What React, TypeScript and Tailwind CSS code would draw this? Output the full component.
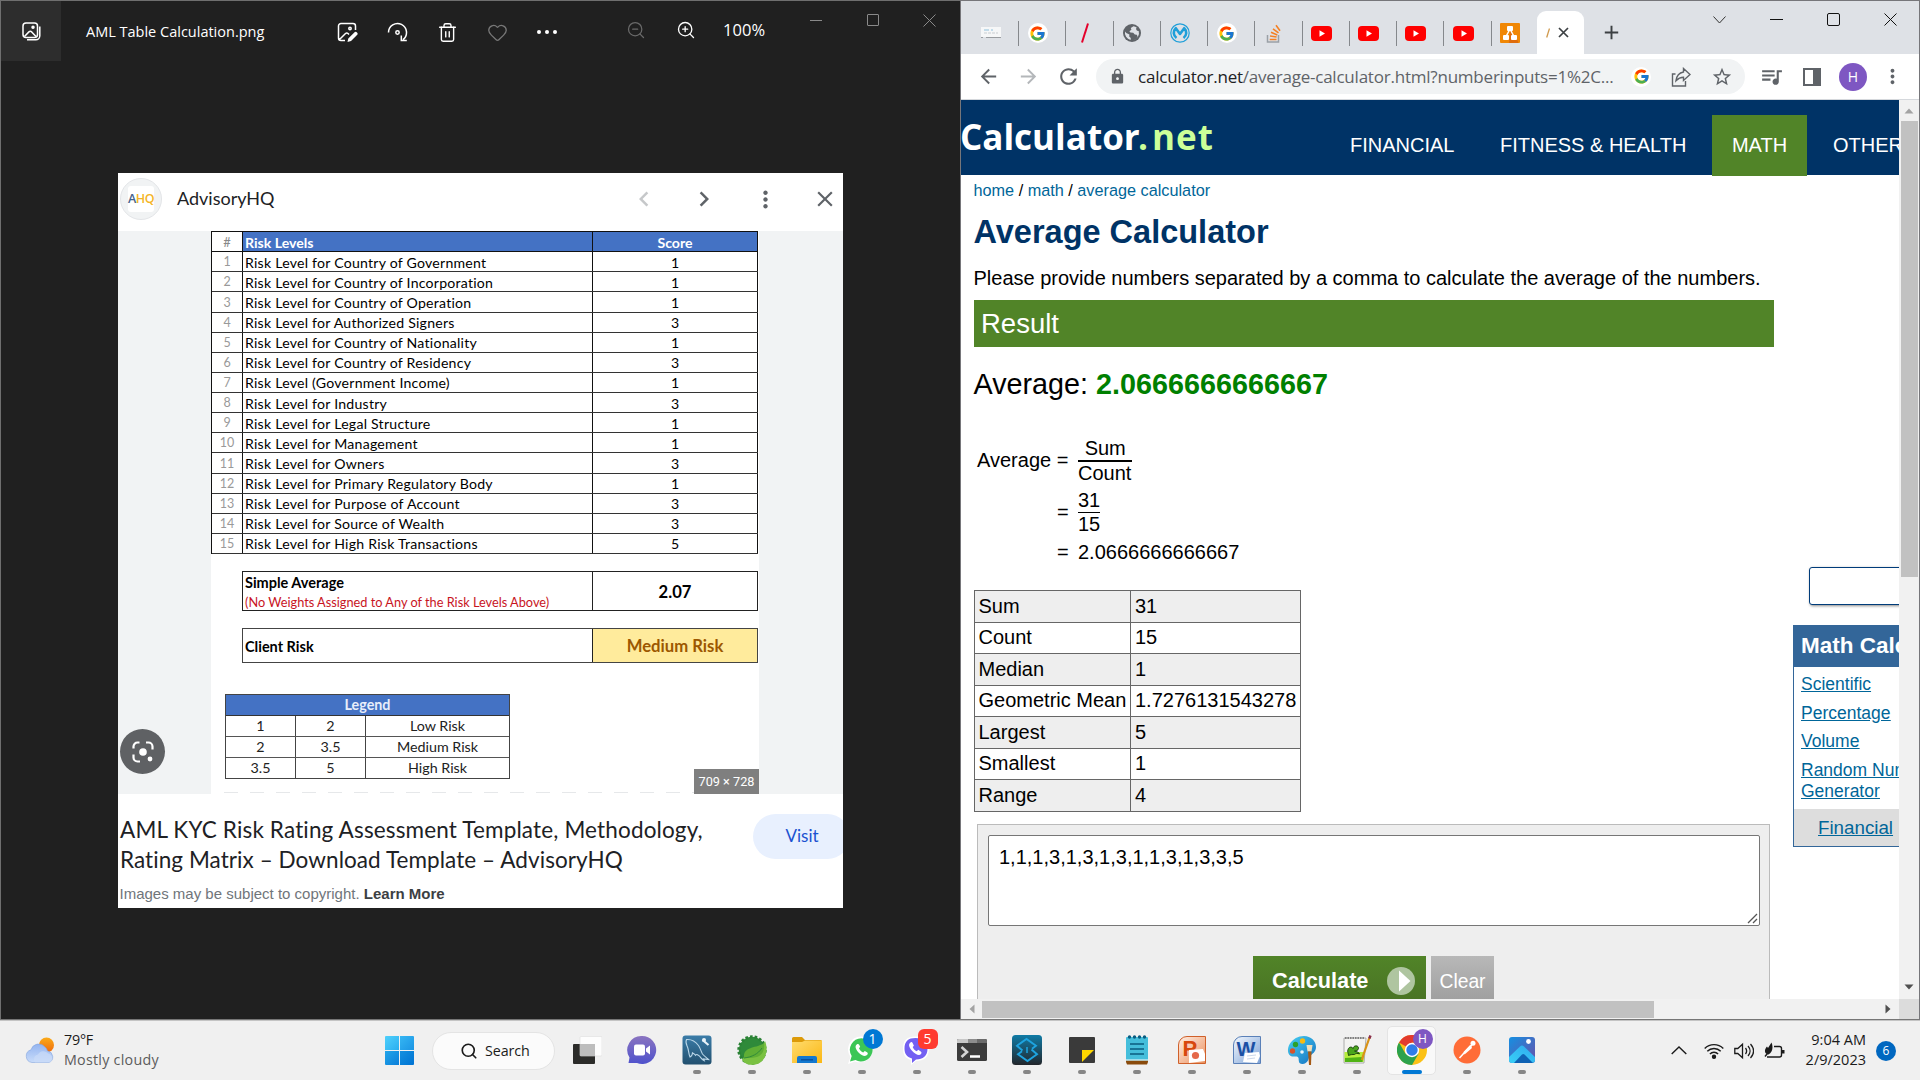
import React from "react";
import { FcGoogle } from "react-icons/fc";
import {
  MdArrowBack,
  MdArrowForward,
  MdRefresh,
  MdLock,
  MdStarBorder,
  MdQueueMusic,
  MdMoreVert,
  MdClose,
  MdChevronLeft,
  MdChevronRight,
  MdAdd,
} from "react-icons/md";
import { Heart, Trash2, ZoomIn, ZoomOut, Search } from "lucide-react";

const SEGOE = "font-['Open_Sans','Noto_Sans',sans-serif]";
const ARIAL = "font-['Liberation_Sans',Arial,sans-serif]";
const CALIBRI = "font-['Lato',sans-serif]";
const GOOGLE = "font-['Lato',sans-serif]";

type Kids = { children?: React.ReactNode };

/* ------------------------------ Photos window ------------------------------ */

const risks: [string, number][] = [
  ["Risk Level for Country of Government", 1],
  ["Risk Level for Country of Incorporation", 1],
  ["Risk Level for Country of Operation", 1],
  ["Risk Level for Authorized Signers", 3],
  ["Risk Level for Country of Nationality", 1],
  ["Risk Level for Country of Residency", 3],
  ["Risk Level (Government Income)", 1],
  ["Risk Level for Industry", 3],
  ["Risk Level for Legal Structure", 1],
  ["Risk Level for Management", 1],
  ["Risk Level for Owners", 3],
  ["Risk Level for Primary Regulatory Body", 1],
  ["Risk Level for Purpose of Account", 3],
  ["Risk Level for Source of Wealth", 3],
  ["Risk Level for High Risk Transactions", 5],
];

const legend = [
  ["1", "2", "Low Risk"],
  ["2", "3.5", "Medium Risk"],
  ["3.5", "5", "High Risk"],
];

function PhotosIcon() {
  return (
    <svg width="19" height="19" viewBox="0 0 19 19" fill="none" stroke="#fff" strokeWidth="1.5">
      <rect x="1" y="1" width="14.5" height="14.5" rx="3" />
      <path d="M17.8 4.5v9.3a4 4 0 0 1-4 4H5M2.5 14.5l4.4-4.6a2 2 0 0 1 2.8 0l4.3 4.6" />
      <circle cx="11" cy="5.2" r="1" fill="#fff" />
    </svg>
  );
}

function EditIcon() {
  return (
    <svg width="21" height="21" viewBox="0 0 21 21" fill="none" stroke="#fff" strokeWidth="1.5">
      <path d="M18.5 8V4a2.5 2.5 0 0 0-2.5-2.5H4A2.5 2.5 0 0 0 1.500 4v12A2.500 2.500 0 0 0 4 18.500h4M2.500 17.500l6-6a2 2 0 0 1 2.500 0l1 1" />
      <circle cx="13" cy="6.500" r="1.200" />
      <path d="M10.500 20l.8-3.600 6-6a1.900 1.900 0 0 1 2.700 2.700l-6 6z" fill="#fff" stroke="none" />
    </svg>
  );
}

function RotateIcon() {
  return (
    <svg width="21" height="21" viewBox="0 0 21 21" fill="none" stroke="#fff" strokeWidth="1.500">
      <path d="M1.500 10.500a9 9 0 1 1 14.500 7.100M14.300 13.500v5h5.500" />
      <circle cx="10.500" cy="10.500" r="1.700" />
    </svg>
  );
}

function Cell({ w, children }: Kids & { w: string }) {
  return <div className={`flex shrink-0 items-center justify-center ${w}`}>{children}</div>;
}

function PhotosToolbar() {
  return (
    <div className={`flex h-[60px] text-white ${SEGOE}`}>
      <div className="flex w-[60px] shrink-0 items-center justify-center bg-[#2d2d2d]">
        <PhotosIcon />
      </div>
      <div className="ml-[25px] flex w-[236px] shrink-0 items-center pt-[2px] text-[14.500px] whitespace-nowrap">
        AML Table Calculation.png
      </div>
      <div className="flex shrink-0 pt-[2px]">
        <Cell w="w-[50px]"><EditIcon /></Cell>
        <Cell w="w-[50px]"><RotateIcon /></Cell>
        <Cell w="w-[50px]"><Trash2 size={21} strokeWidth={1.600} /></Cell>
        <Cell w="w-[50px]"><Heart size={21} strokeWidth={1.500} color="#777" /></Cell>
        <Cell w="w-[50px]">
          <div className="flex gap-[4px]">
            <i className="size-[4px] rounded-full bg-white" />
            <i className="size-[4px] rounded-full bg-white" />
            <i className="size-[4px] rounded-full bg-white" />
          </div>
        </Cell>
      </div>
      <div className="ml-[39px] flex shrink-0 pb-[2px]">
        <Cell w="w-[50px]"><ZoomOut size={20} strokeWidth={1.500} color="#6a6a6a" /></Cell>
        <Cell w="w-[50px]"><ZoomIn size={20} strokeWidth={1.600} /></Cell>
        <div className="ml-[12px] flex w-[64px] items-center text-[16.500px] tracking-[0.100px]">100%</div>
      </div>
      <div className="flex h-[38px] shrink-0">
        <Cell w="w-[57px]"><i className="h-px w-[12px] bg-[#8a8a8a]" /></Cell>
        <Cell w="w-[57px]"><i className="size-[12px] rounded-[1px] border border-[#8a8a8a]" /></Cell>
        <Cell w="w-[57px]">
          <svg width="13" height="13" viewBox="0 0 13 13" stroke="#8a8a8a"><path d="M.5.5l12 12M12.500.5l-12 12" /></svg>
        </Cell>
      </div>
    </div>
  );
}

function RiskSheet() {
  return (
    <div className={`flex w-[548px] shrink-0 flex-col bg-white text-black ${CALIBRI}`}>
      <div className="flex w-[547px] flex-col border-t border-l border-[#111]">
        <div className="flex h-[20.140px] border-b border-[#111] text-[14.100px] font-bold text-white">
          <div className="flex w-[31px] items-center justify-center border-r border-[#111] bg-white pt-[2px] text-[13px] font-normal text-[#888]">#</div>
          <div className="flex w-[350px] items-center border-r border-[#111] bg-[#4472c4] pt-px pl-[2px]">Risk Levels</div>
          <div className="flex flex-1 items-center justify-center border-r border-[#111] bg-[#4472c4] pt-px">Score</div>
        </div>
        {risks.map(([label, score], i) => (
          <div key={label} className="flex h-[20.140px] border-b border-[#333] text-[14.100px]">
            <div className="flex w-[31px] items-center justify-center border-r border-[#111] pt-[2px] text-[12.500px] text-[#999]">{i + 1}</div>
            <div className="flex w-[350px] items-center border-r border-[#111] pt-px pl-[2px] tracking-[0.240px] whitespace-nowrap">{label}</div>
            <div className="flex flex-1 items-center justify-center border-r border-[#111] pt-px">{score}</div>
          </div>
        ))}
      </div>
      <div className="mt-[17px] ml-[31px] flex h-[40px] w-[516px] border border-[#222]">
        <div className="flex w-[350px] flex-col border-r border-[#222] pl-[2px]">
          <span className="h-[20px] text-[14.500px] leading-[21px] font-bold">Simple Average</span>
          <span className="h-[18px] text-[12.750px] leading-[20px] whitespace-nowrap text-[#c8141e]">(No Weights Assigned to Any of the Risk Levels Above)</span>
        </div>
        <div className="flex flex-1 items-center justify-center pt-[3px] text-[16.600px] font-bold">2.07</div>
      </div>
      <div className="mt-[17px] ml-[31px] flex h-[35px] w-[516px] border border-[#444]">
        <div className="flex w-[350px] items-center border-r border-[#222] pt-[2px] pl-[2px] text-[14.500px] font-bold">Client Risk</div>
        <div className="flex flex-1 items-center justify-center bg-[#ffeb9c] pt-[3px] text-[16.700px] font-bold text-[#9c5700]">Medium Risk</div>
      </div>
      <div className="mt-[31px] ml-[14px] flex w-[285px] flex-col border border-[#444] text-[14.300px] text-[#222]">
        <div className="flex h-[21px] items-center justify-center border-b border-[#333] bg-[#4472c4] font-bold text-[#e8eefa]">Legend</div>
        {legend.map((row, i) => (
          <div key={i} className="flex h-[21px] border-b border-[#555] last:h-[20px] last:border-b-0">
            <div className="flex w-[70px] items-center justify-center border-r border-[#444]">{row[0]}</div>
            <div className="flex w-[70px] items-center justify-center border-r border-[#444]">{row[1]}</div>
            <div className="flex flex-1 items-center justify-center">{row[2]}</div>
          </div>
        ))}
      </div>
      <div className="mt-auto flex items-end">
        <div className="mb-px ml-[13px] h-px w-[470px] bg-[repeating-linear-gradient(90deg,#e6e8ea_0_14px,#fff_14px_26px)]" />
        <div className="-mt-[20px] flex h-[25px] w-[65px] items-center justify-center bg-[#7f7f7f] text-[12.700px] text-white font-['Roboto',sans-serif]">709 × 728</div>
      </div>
    </div>
  );
}

function PhotosWindow() {
  return (
    <div className="flex h-[1019px] w-[960px] shrink-0 flex-col border-t border-l border-[#6f6f6f] bg-[#202020]">
      <PhotosToolbar />
      <div className="mt-[112px] ml-[117px] flex h-[735px] w-[725px] flex-col overflow-hidden bg-white">
        <div className="flex h-[58px] shrink-0 items-center pl-[2px]">
          <div className="-mt-[6px] flex size-[42px] shrink-0 items-center justify-center rounded-full border border-[#e3e5e8] bg-[#f1f3f4]">
            <div className="flex size-[26px] items-center justify-center rounded-[3px] bg-white text-[12.500px] font-semibold tracking-[-0.500px] text-[#f4b526] font-['Open_Sans',sans-serif]">
              <span className="text-[#44648c]">A</span>HQ
            </div>
          </div>
          <div className={`-mt-[8px] ml-[15px] flex w-[431px] shrink-0 text-[18px] text-[#202124] ${GOOGLE}`}>AdvisoryHQ</div>
          <div className="-mt-[6px] flex text-[#5f6368]">
            <Cell w="w-[72px]"><MdChevronLeft size={30} color="#c6c8ca" /></Cell>
            <Cell w="w-[48px]"><MdChevronRight size={30} /></Cell>
            <Cell w="w-[74px]"><MdMoreVert size={27} /></Cell>
            <Cell w="w-[46px]"><MdClose size={26} /></Cell>
          </div>
        </div>
        <div className="flex h-[563px] shrink-0 bg-[#f1f3f4]">
          <div className="flex w-[93px] shrink-0 items-end pb-[20px] pl-[2px]">
            <div className="flex size-[45px] items-center justify-center rounded-full bg-[#5f6164]">
              <svg width="22" height="22" viewBox="0 0 22 22" fill="none" stroke="#fff" strokeWidth="2.200">
                <path d="M1.500 7.500V5.500a4 4 0 0 1 4-4h2M14 1.500h2.500a4 4 0 0 1 4 4v3M1.500 13.500v3a4 4 0 0 0 4 4h2.500" />
                <circle cx="11" cy="11" r="3.800" fill="#fff" stroke="none" />
                <circle cx="18" cy="18" r="2.400" fill="#fff" stroke="none" />
              </svg>
            </div>
          </div>
          <RiskSheet />
        </div>
        <div className="flex h-[114px] shrink-0 justify-between pl-[2px]">
          <div className="flex flex-col">
            <div className={`mt-[21px] text-[22.500px] leading-[30px] tracking-[0.150px] whitespace-nowrap text-[#202124] ${GOOGLE}`}>
              <p>AML KYC Risk Rating Assessment Template, Methodology,</p>
              <p className="tracking-[0.070px]">Rating Matrix – Download Template – AdvisoryHQ</p>
            </div>
            <p className={`mt-[8px] -ml-[0.500px] text-[15px] leading-[22px] text-[#70757a] ${ARIAL}`}>
              Images may be subject to copyright. <b className="text-[#3c4043]">Learn More</b>
            </p>
          </div>
          <div className="mt-[20px] -mr-[7px] flex h-[45px] w-[97px] shrink-0 items-center justify-center rounded-full bg-[#e8f0fe]">
            <span className={`pb-px pl-px text-[17px] text-[#1b52d0] ${GOOGLE}`}>Visit</span>
          </div>
        </div>
      </div>
    </div>
  );
}

/* ------------------------------ Browser window ------------------------------ */

function YouTube() {
  return (
    <svg width="21" height="15" viewBox="0 0 21 15"><rect width="21" height="15" rx="4" fill="#f00" /><path d="M8.500 4.300v6.400l5.500-3.200z" fill="#fff" /></svg>
  );
}

const favicons = [
  <svg key="a" width="20" height="12" viewBox="0 0 20 12"><rect width="20" height="10" fill="#f6f7f8" /><path d="M3 3h5M10 3h2" stroke="#8fc0dc" /><path d="M3 6h14" stroke="#c9cdd1" strokeDasharray="3 1" /><path d="M0 10.500h2M5 10.500h15" stroke="#9a9da1" strokeWidth="1.200" /></svg>,
  <div key="b" className="flex size-[20px] items-center justify-center rounded-full bg-white"><FcGoogle size={17} /></div>,
  <svg key="c" width="10" height="20" viewBox="0 0 10 20" stroke="#e4002b" strokeWidth="2"><path d="M8 .5L2 19.500" /></svg>,
  <svg key="d" width="18" height="18" viewBox="0 0 18 18"><circle cx="9" cy="9" r="9" fill="#5f6368" /><path d="M10.500 2.200L7.800 4l.6 1.800-2 1.400 1 1.300 2.800.2 1.600 1.800 2 .3.800 1.800-1.500 2.200-2.600 1.200a7.200 7.200 0 0 0 5.200-9l-1.700-.3-1-1.800.7-1.300a7 7 0 0 0-3.200-1.400zM2 7.500a7.200 7.200 0 0 0 5.600 8.400l.2-2-1.600-1.500.2-1.900L3.300 9z" fill="#dee1e6" /></svg>,
  <svg key="e" width="20" height="20" viewBox="0 0 20 20" fill="none" stroke="#1f9fd9"><circle cx="10" cy="10" r="9.200" strokeWidth="1.200" /><path d="M6.500 15A6.300 6.300 0 0 1 5.800 5.200L10 11l4.200-5.800A6.300 6.300 0 0 1 13.500 15" strokeWidth="2.600" strokeLinejoin="round" /></svg>,
  <div key="f" className="flex size-[20px] items-center justify-center rounded-full bg-white"><FcGoogle size={17} /></div>,
  <svg key="g" width="18" height="20" viewBox="0 0 18 20" fill="none"><path d="M2.500 12v7h11v-7" stroke="#9aa0a6" strokeWidth="1.500" /><path d="M4.700 16.500h6.800M5 13l6.600 1M6 9.300l6.300 2.600M8 5.800l5.500 4M11 2.300l4 5.500" stroke="#f48024" strokeWidth="1.600" /></svg>,
  <YouTube key="h" />,
  <YouTube key="i" />,
  <YouTube key="j" />,
  <YouTube key="k" />,
  <svg key="l" width="20" height="20" viewBox="0 0 20 20"><rect width="20" height="20" rx="1" fill="#f08705" /><path d="M10 8l8 10v2H9z" fill="#df6c0c" /><path d="M10 6L6 13.500M10 6l4 7.500" stroke="#fff" strokeWidth="1.500" /><rect x="7" y="3" width="6" height="5" rx="1" fill="#fff" /><rect x="3" y="12" width="6" height="5" rx="1" fill="#fff" /><rect x="11" y="12" width="6" height="5" rx="1" fill="#fff" /></svg>,
];

function TabStrip() {
  return (
    <div className="flex h-[53px] bg-[#dee1e6]">
      <div className="flex w-[576px] shrink-0 items-center pt-[11px] pl-[8px]">
        {favicons.map((f, i) => (
          <div key={i} className="flex h-[26px] w-[47.250px] shrink-0 items-center">
            <div className="flex w-[43px] shrink-0 justify-center">{f}</div>
            {i < favicons.length - 1 && <i className="ml-[6px] h-[25px] w-px shrink-0 bg-[#85888c]" />}
          </div>
        ))}
      </div>
      <div className="mt-[10px] flex h-[43px] w-[47px] shrink-0 items-center justify-center gap-[8px] rounded-t-[9px] bg-white pr-[6px]">
        <svg width="4" height="10" viewBox="0 0 4 10" stroke="#d09a4e" strokeWidth="1.300"><path d="M3.500.5L.7 9.500" /></svg>
        <svg width="11" height="11" viewBox="0 0 11 11" stroke="#3c4043" strokeWidth="1.700"><path d="M1 1l9 9M10 1l-9 9" /></svg>
      </div>
      <div className="mt-[10px] flex h-[43px] w-[54px] shrink-0 items-center justify-center"><MdAdd size={23} color="#3c4043" /></div>
      <div className="ml-auto flex h-[37px]">
        <Cell w="w-[57px]"><svg width="13" height="8" viewBox="0 0 13 8" fill="none" stroke="#333"><path d="M.5.5l6 6.500 6-6.500" /></svg></Cell>
        <Cell w="w-[57px]"><i className="h-px w-[13px] bg-[#111]" /></Cell>
        <Cell w="w-[57px]"><i className="size-[13px] rounded-[2px] border border-[#111]" /></Cell>
        <Cell w="w-[57px]"><svg width="13" height="13" viewBox="0 0 13 13" stroke="#111"><path d="M.5.5l12 12M12.500.5l-12 12" /></svg></Cell>
      </div>
    </div>
  );
}

function Toolbar() {
  return (
    <div className="flex h-[46px] items-center border-b border-[#d5d8dc] bg-white text-[#5f6368]">
      <div className="flex pl-[7px]">
        <Cell w="w-[40px]"><MdArrowBack size={23} /></Cell>
        <Cell w="w-[41px]"><MdArrowForward size={23} color="#b4b7ba" /></Cell>
        <Cell w="w-[39px]"><MdRefresh size={25} /></Cell>
      </div>
      <div className="ml-[8px] flex h-[35px] w-[649px] shrink-0 items-center rounded-full bg-[#f1f3f4]">
        <div className="flex w-[42px] justify-center pl-px"><MdLock size={17} /></div>
        <div className={`flex w-[485px] text-[17px] tracking-[-0.220px] whitespace-nowrap ${SEGOE}`}>
          <span className="text-[#202124]">calculator.net</span>/average-calculator.html?numberinputs=1%2C...
        </div>
        <Cell w="w-[36px]"><div className="flex size-[20px] items-center justify-center rounded-full bg-white"><FcGoogle size={17} /></div></Cell>
        <Cell w="w-[44px]">
          <svg width="20" height="20" viewBox="0 0 20 20" fill="none" stroke="#5f6368" strokeWidth="1.400"><path d="M4.500 7H1.500v12h13v-5M12.500 1.500L19 7.500l-6.500 6V10.300c-3 0-5 .8-7.500 3.400.6-4.800 3.500-8 7.500-8.700z" /></svg>
        </Cell>
        <Cell w="w-[38px]"><MdStarBorder size={22} /></Cell>
      </div>
      <div className="ml-[5px] flex">
        <Cell w="w-[42px]"><MdQueueMusic size={25} /></Cell>
        <Cell w="w-[39px]"><i className="h-[18px] w-[18px] border-[2px] border-r-[8px] border-[#5f6368]" /></Cell>
        <Cell w="w-[44px]">
          <div className={`flex size-[28px] items-center justify-center rounded-full bg-[#7e57c2] text-[14px] text-white ${SEGOE}`}>H</div>
        </Cell>
        <Cell w="w-[34px]"><MdMoreVert size={23} /></Cell>
      </div>
    </div>
  );
}

const stats = [
  ["Sum", "31"],
  ["Count", "15"],
  ["Median", "1"],
  ["Geometric Mean", "1.7276131543278"],
  ["Largest", "5"],
  ["Smallest", "1"],
  ["Range", "4"],
];

function SiteHeader() {
  return (
    <div className="flex h-[75px] shrink-0 bg-[#003366] text-[20px] whitespace-nowrap text-white">
      <div className="flex h-[74px] w-[369px] shrink-0 items-center font-['Open_Sans',sans-serif] text-[35px] font-bold">
        <span className="-ml-px w-[178px] shrink-0">Calculator</span>
        <span className="w-[14px] shrink-0 text-[#ccff99]">.</span>
        <span className="tracking-[1px] text-[#ccff99]">net</span>
      </div>
      <div className="mt-[15px] flex h-[61px] shrink-0">
        <div className="ml-[20px] flex w-[150px] items-center pb-[2px]">FINANCIAL</div>
        <div className="flex w-[212px] items-center pb-[2px]">FITNESS &amp; HEALTH</div>
        <div className="flex h-[61px] w-[95px] items-center justify-center bg-[#518428] pb-[2px]">MATH</div>
        <div className="ml-[26px] flex items-center pb-[2px]">OTHER</div>
      </div>
    </div>
  );
}

function Fraction({ top, bottom, thick }: { top: string; bottom: string; thick?: boolean }) {
  return (
    <div className="flex flex-col items-center">
      <span className={thick ? "h-[23px] leading-[23px]" : "h-[24px] leading-[24px]"}>{top}</span>
      <span className={thick ? "h-[2px] w-full bg-black" : "h-px w-full bg-black"} />
      <span className={thick ? "h-[22px] pr-px leading-[22px]" : "h-[22px] leading-[22px]"}>{bottom}</span>
    </div>
  );
}

function Main() {
  return (
    <div className="flex w-[814px] shrink-0 flex-col pl-[13px] text-[20px] whitespace-nowrap text-black">
      <div className="-ml-[0.500px] flex h-[31px] shrink-0 items-center gap-[4.500px] text-[16.250px]">
        <a className="text-[#006699]">home</a>/<a className="text-[#006699]">math</a>/<a className="text-[#006699]">average calculator</a>
      </div>
      <h1 className="-ml-[0.500px] flex h-[52px] shrink-0 items-center pt-px text-[32.500px] font-bold text-[#003366]">Average Calculator</h1>
      <p className="-ml-[0.500px] flex h-[42px] shrink-0 items-center pb-[3px]">Please provide numbers separated by a comma to calculate the average of the numbers.</p>
      <h2 className="flex h-[47px] w-[800px] shrink-0 items-center bg-[#518428] pl-[7px] text-[27.500px] text-white">Result</h2>
      <p className="-ml-[0.500px] flex h-[73px] shrink-0 items-center gap-[8px] pt-[2px] text-[28.750px]">
        Average: <b className="text-[#008000]">2.0666666666667</b>
      </p>
      <div className="mt-[17px] flex shrink-0 flex-col gap-[4px]">
        <div className="flex h-[47px] items-center">
          <span className="w-[104px] pb-[2px] pl-[3px]">Average =</span>
          <Fraction top="Sum" bottom="Count" thick />
        </div>
        <div className="flex h-[47px] items-center">
          <span className="w-[104px] pl-[83px]">=</span>
          <Fraction top="31" bottom="15" />
        </div>
      </div>
      <div className="flex h-[34px] shrink-0 items-center">
        <span className="w-[104px] pl-[83px]">=</span>2.0666666666667
      </div>
      <div className="mt-[21px] flex w-[327px] shrink-0 flex-col border-t border-l border-[#666]">
        {stats.map(([k, v]) => (
          <div key={k} className="flex h-[31px] border-b border-[#666] odd:h-[32px] odd:bg-[#eee]">
            <div className="flex w-[156px] items-center border-r border-[#666] pb-[2px] pl-[3.500px]">{k}</div>
            <div className="flex flex-1 items-center border-r border-[#666] pb-[2px] pl-[4px]">{v}</div>
          </div>
        ))}
      </div>
      <div className="mt-[12px] ml-[3px] flex h-[175px] w-[793px] shrink-0 flex-col border border-b-0 border-[#bbb] bg-[#eee] pt-[10px] pl-[10px]">
        <div className="flex h-[91px] w-[772px] shrink-0 justify-between rounded-[2px] border border-[#767676] bg-white pl-[10px]">
          <span className="mt-[10px] h-[23px] leading-[23px]">1,1,1,3,1,3,1,3,1,1,3,1,3,3,5</span>
          <svg className="mr-px mb-px self-end" width="11" height="11" viewBox="0 0 11 11" stroke="#555" strokeWidth="1.300"><path d="M1 10L10 1M6 10l4-4" /></svg>
        </div>
        <div className="mt-[30px] ml-[265px] flex h-[43px] gap-[5px] text-white">
          <div className="flex w-[173px] items-center justify-between bg-linear-to-b from-[#518428] to-[#4a7424] pt-[7px] pr-[11px] pl-[19px] text-[21.700px] font-bold">
            Calculate
            <svg width="28" height="28" viewBox="0 0 28 28"><circle cx="14" cy="14" r="14" fill="#afc5a0" /><path d="M12 3.500v21L23.500 14z" fill="#fff" /></svg>
          </div>
          <div className="flex w-[63px] items-center justify-center bg-linear-to-b from-[#b8b8b8] to-[#a0a0a0] pt-[9px] text-[19.300px]">Clear</div>
        </div>
      </div>
    </div>
  );
}

function Sidebar() {
  return (
    <div className="flex w-[106px] shrink-0 flex-col overflow-hidden whitespace-nowrap">
      <div className="mt-[392px] ml-[16px] h-[38px] w-[200px] shrink-0 rounded-[3px] border border-[#003c7a] bg-white shadow-[1px_1px_3px_#888]" />
      <div className="mt-[20px] flex w-[300px] shrink-0 flex-col border border-[#336699]">
        <div className="flex h-[41px] items-center bg-[#336699] pb-[2px] pl-[7px] text-[22.500px] font-bold text-white">Math Calculators</div>
        <div className="flex h-[142px] flex-col pt-[7px] pl-[7px] text-[17.500px] leading-[21px] text-[#006699] underline underline-offset-1">
          <a className="mb-[8px]">Scientific</a>
          <a className="mb-[7px]">Percentage</a>
          <a className="mb-[8px]">Volume</a>
          <a>Random Number</a>
          <a>Generator</a>
        </div>
        <div className="flex h-[37px] items-center bg-[#ddd] pt-px pl-[24px] text-[18.750px] text-[#006699] underline underline-offset-1">Financial</div>
      </div>
    </div>
  );
}

function Arrow({ d, fill }: { d: string; fill: string }) {
  return <svg width="10" height="10" viewBox="0 0 10 10" fill={fill}><path d={d} /></svg>;
}

function BrowserWindow() {
  return (
    <div className="flex h-[1019px] w-[960px] shrink-0 flex-col border-x border-t border-[#76767a] bg-white">
      <TabStrip />
      <Toolbar />
      <div className={`flex h-[899px] shrink-0 ${ARIAL}`}>
        <div className="flex w-[938px] shrink-0 flex-col overflow-hidden">
          <SiteHeader />
          <div className="flex h-[824px] shrink-0">
            <Main />
            <div className="w-[18px] shrink-0" />
            <Sidebar />
          </div>
        </div>
        <div className="flex w-[20px] shrink-0 flex-col items-center bg-[#f1f1f1]">
          <div className="flex h-[21px] items-center"><Arrow d="M5 2.500L9.500 7.500H.5z" fill="#a3a3a3" /></div>
          <div className="h-[456px] w-[17px] bg-[#c1c1c1]" />
          <div className="mt-auto flex h-[24px] items-center"><Arrow d="M5 7.500L9.500 2.500H.5z" fill="#505050" /></div>
        </div>
      </div>
      <div className="flex h-[20px] shrink-0 items-center bg-[#f1f1f1]">
        <div className="flex w-[21px] justify-center"><Arrow d="M2.500 5L7.500.5v9z" fill="#a3a3a3" /></div>
        <div className="h-[17px] w-[672px] bg-[#c1c1c1]" />
        <div className="ml-auto flex w-[22px] justify-center"><Arrow d="M7.500 5L2.500.5v9z" fill="#505050" /></div>
        <div className="h-[20px] w-[20px] bg-[#dcdcdc]" />
      </div>
    </div>
  );
}

/* --------------------------------- Taskbar --------------------------------- */

function WeatherIcon() {
  return (
    <svg width="31" height="27" viewBox="0 0 31 27">
      <defs>
        <linearGradient id="cloud" x1="0" y1="0" x2="0" y2="1"><stop stopColor="#93b4f0" /><stop offset="1" stopColor="#c9dcfa" /></linearGradient>
        <linearGradient id="sun" x1="0" y1="0" x2="0" y2="1"><stop stopColor="#fbab18" /><stop offset="1" stopColor="#ee6a10" /></linearGradient>
      </defs>
      <circle cx="21.500" cy="8" r="7.500" fill="url(#sun)" />
      <path d="M7 25.500A6.500 6.500 0 0 1 6 12.800 8 8 0 0 1 20 10a8 8 0 0 1 2.500 4 6 6 0 0 1 1.500 11.500z" fill="url(#cloud)" stroke="#86a6de" strokeWidth=".6" />
      <path d="M10 25.500a5 5 0 0 1 3-8 6 6 0 0 1 10-1 5 5 0 0 1 2 9z" fill="#cbdcf8" opacity=".7" />
    </svg>
  );
}

function Badge({ children, cls }: Kids & { cls: string }) {
  return (
    <span className={`absolute flex size-[20px] items-center justify-center text-[14px] leading-none text-white ${SEGOE} ${cls}`}>{children}</span>
  );
}

const sz = { width: 30, height: 30, viewBox: "0 0 30 30" };

const apps: { icon: React.ReactNode; state?: "none" | "active" }[] = [
  {
    state: "none",
    icon: (
      <svg {...sz}>
        <rect x="1" y="9" width="22" height="20" rx="1" fill="#2b2b29" />
        <rect x="8" y="1.500" width="22" height="19.500" rx="1" fill="#fdfdfd" stroke="#ddd" strokeWidth=".6" />
        <rect x="8" y="9" width="15" height="12" fill="#bdbdbd" />
      </svg>
    ),
  },
  {
    state: "none",
    icon: (
      <svg {...sz}>
        <defs><linearGradient id="chat" x1="0" y1="0" x2="0" y2="1"><stop stopColor="#8a74c0" /><stop offset="1" stopColor="#4f52cc" /></linearGradient></defs>
        <path d="M15 1a14 14 0 1 1-5 27H1.500l1-5.500A14 14 0 0 1 15 1z" fill="url(#chat)" />
        <rect x="7" y="9.500" width="11" height="11" rx="2" fill="#fff" /><path d="M19 13.500l4-3v9l-4-3z" fill="#fff" />
      </svg>
    ),
  },
  {
    icon: (
      <svg {...sz} fill="none">
        <defs><linearGradient id="sql" x1="0" y1="0" x2="0" y2="1"><stop stopColor="#3b7ca8" /><stop offset="1" stopColor="#22506f" /></linearGradient></defs>
        <rect x=".5" y=".5" width="29" height="29" rx="3" fill="url(#sql)" />
        <path d="M4.500 4.500c5-.5 9 2 12 6 2 3 2.500 6 4 8.500 1.500 2 3.500 3 6 5.500l-5-.5.800 1.800c-3-1-3.500-4.500-6-5.500-1-1-2-1-2.800 0-.8-1.500-2-2-3-2.500 0 2-1 3.500-2.500 4.200-1.500-3-1-6-2.500-10-1-2.500-2.500-4.500-1-7.500z" stroke="#b9d6e8" strokeWidth="1.100" />
        <path d="M20.500 5l6 5" stroke="#e8f2f8" strokeWidth="2.200" /><circle cx="22" cy="5" r="2" fill="#e8f2f8" />
      </svg>
    ),
  },
  {
    icon: (
      <svg {...sz}>
        <circle cx="15" cy="15" r="13.200" fill="#2f8a3a" stroke="#2a8135" strokeWidth="3" strokeDasharray="2.600 2" />
        <path d="M28 6c3.500 8 2 23-12.500 23.800-6 .2-9.500-3-10.500-5C9 17 24 17 28 6z" fill="#7ac142" />
        <path d="M7 22.500C6 11 20 13.500 27 8c1.500 13-7 16.500-20 14.500z" fill="#5fae35" />
        <path d="M7 23c8-1 14-4 18-10" stroke="#2f8a3a" strokeWidth="1" fill="none" />
      </svg>
    ),
  },
  {
    icon: (
      <svg {...sz}>
        <defs><linearGradient id="fold" x1="0" y1="0" x2="1" y2="1"><stop stopColor="#ffdc6e" /><stop offset="1" stopColor="#fbb714" /></linearGradient></defs>
        <path d="M0 3.500A1.500 1.500 0 0 1 1.500 2H10l3 3h15.500A1.500 1.500 0 0 1 30 6.500V9H0z" fill="#dc9a09" />
        <path d="M0 7h10l3-1.500h17V28H0z" fill="url(#fold)" />
        <path d="M5 28v-5a2 2 0 0 1 2-2h16a2 2 0 0 1 2 2v5z" fill="#1378cf" /><path d="M9 24.800h12" stroke="#0a4b96" strokeWidth="1.300" />
      </svg>
    ),
  },
  {
    icon: (
      <>
        <svg {...sz}>
          <path d="M14.500 1.500A13 13 0 1 1 8 26.500L1 29l2.500-7A13 13 0 0 1 14.500 1.500z" fill="#fff" />
          <path d="M14.500 3.200A11.600 11.600 0 1 1 8.500 25L3 26.500 4.700 21A11.600 11.600 0 0 1 14.500 3.200z" fill="#3cc656" />
          <path d="M10 9.300c-2.500 1.500-1.500 5 1.500 8.200 3.200 3.200 7 4.600 8.800 2.300.8-1.200.6-2-.3-2.600l-2.200-1.300-1.600 1.500c-2-.7-3.500-2.300-4.200-4.200l1.200-1.400-1.200-2.300c-.6-.8-1.300-.7-2-.2z" fill="#fff" />
        </svg>
        <Badge cls="-top-[6px] left-[16px] rounded-full bg-[#0078d4]">1</Badge>
      </>
    ),
  },
  {
    icon: (
      <>
        <svg {...sz}>
          <path d="M13.500 1.500C22 1.500 27 5 27 13.500S22 26 14 26l-5 4v-5C3 23.500 1 19 1 13.500 1 5 5.500 1.500 13.500 1.500z" fill="#fff" />
          <path d="M13.500 3C21 3 25.500 6 25.500 13.500S21 24.500 14 24.500L10 28v-4.500C4.500 22 2.500 18.500 2.500 13.500 2.500 6 6.500 3 13.500 3z" fill="#7360f2" />
          <path d="M8.500 7.500c-2.500 1.500-1.500 5 1.500 8.200 3.200 3.200 7 5.600 9 3.300.8-1.200.6-2-.3-2.600l-2.400-1.600-1.600 1.500c-2-.7-3.300-2.300-4-4.200l1.200-1.400-1.400-3c-.6-.8-1.300-.7-2-.2z" fill="#fff" />
        </svg>
        <Badge cls="-top-[6px] left-[16px] rounded-[6px] bg-[#ff3b30]">5</Badge>
      </>
    ),
  },
  {
    icon: (
      <svg {...sz}>
        <rect y="4" width="30" height="22" rx="1.500" fill="#3c3c3c" /><path d="M0 8V5.500A1.500 1.500 0 0 1 1.500 4H11v4z" fill="#c8c8c8" /><path d="M11 4h9v4h-9z" fill="#8d8d8d" /><path d="M20 4h8.500A1.500 1.500 0 0 1 30 5.500V8H20z" fill="#6b6b6b" />
        <path d="M4.500 12l5.500 5-5.500 5" fill="none" stroke="#d5d5d5" strokeWidth="2.600" /><path d="M13 21.500h10" stroke="#fff" strokeWidth="2.500" />
      </svg>
    ),
  },
  {
    icon: (
      <svg {...sz} fill="none">
        <defs><linearGradient id="sd" x1="0" y1="0" x2="0" y2="1"><stop stopColor="#0f7ba6" /><stop offset="1" stopColor="#23262b" /></linearGradient></defs>
        <rect width="30" height="30" rx="3.500" fill="url(#sd)" />
        <path d="M10.500 15.500L5 10.800 14.500 4l9.500 6.800-4 3M19.500 14.500L25 19.200 15.500 26 6 19.200l4-3" stroke="#1ea4e0" strokeWidth="1.900" /><path d="M15 12v6" stroke="#1ea4e0" strokeWidth="1.500" />
      </svg>
    ),
  },
  { icon: <svg {...sz}><rect x="2" y="2" width="26" height="26" rx="1" fill="#3a3a3a" /><path d="M15 15h12L15 27z" fill="#ffd800" /></svg> },
  {
    icon: (
      <svg {...sz}>
        <rect x="4" y="2" width="22" height="25" rx="1" fill="#45bedb" /><path d="M4 25.500h22V27l-1 2.500H5L4 27z" fill="#8a4b0d" /><path d="M4 25h22" stroke="#fff" />
        <path d="M8 9h14M8 14h14M8 19h14" stroke="#0a5c80" strokeWidth="1.700" />
        <g fill="#0a5c80"><circle cx="7.500" cy="2" r="1.700" /><circle cx="12.500" cy="2" r="1.700" /><circle cx="17.500" cy="2" r="1.700" /><circle cx="22.500" cy="2" r="1.700" /></g>
      </svg>
    ),
  },
  {
    icon: (
      <div className="relative flex size-[28px] items-start rounded-tl-[9px] border border-[#d0602a] bg-linear-to-br from-[#fdeee4] to-[#e9905c] pl-[4px]">
        <span className="font-['Liberation_Sans',sans-serif] text-[22px] leading-[24px] font-bold text-[#d8480d]">P</span>
        <svg className="absolute right-0 bottom-0" width="17" height="15" viewBox="0 0 17 15"><path d="M1 2l14-1 2 5v7l-16 2z" fill="#fff" /><circle cx="7.500" cy="7.500" r="3.600" fill="#e5694a" /></svg>
      </div>
    ),
  },
  {
    icon: (
      <div className="relative flex size-[28px] items-start rounded-tl-[9px] border border-[#5a80b8] bg-linear-to-br from-[#f2f7fd] to-[#7fa3d6] pl-[3px]">
        <span className="font-['Liberation_Sans',sans-serif] text-[20px] leading-[24px] font-bold text-[#1b50a4]">W</span>
        <svg className="absolute right-0 bottom-0" width="17" height="12" viewBox="0 0 17 12"><path d="M2 2l14-1 1 4-3 7-14-1z" fill="#fff" /><path d="M4 5l9-1M4 8l8-1" stroke="#ccd8ea" /></svg>
      </div>
    ),
  },
  {
    icon: (
      <svg {...sz}>
        <defs><linearGradient id="pal" x1="0" y1="0" x2="1" y2="1"><stop stopColor="#46d0f2" /><stop offset="1" stopColor="#1570c0" /></linearGradient></defs>
        <path d="M17 1c7 0 12 5 12 11 0 5-4 7-6 9s-1 7-7 8c-5 .5-4-4-4.500-6-1-2.500-4-1-6.500-1.500C0 20 0 13 3 8.500S11 1 17 1z" fill="url(#pal)" />
        <circle cx="8.500" cy="9.500" r="2.700" fill="#2ba12b" /><circle cx="15.500" cy="6" r="2.700" fill="#f8bb10" /><circle cx="5.500" cy="16" r="2.700" fill="#d6532c" /><circle cx="15" cy="17" r="1.800" fill="#eaf4fa" />
        <path d="M19.500 10h6l-1 6.500h-4z" fill="#f1dfba" /><path d="M21 16.500h3.500L24 30h-2z" fill="#a55a16" />
      </svg>
    ),
  },
  {
    icon: (
      <svg {...sz}>
        <path d="M2 3h22l-2 25H2z" fill="#f3f3f1" stroke="#999" strokeWidth=".8" /><path d="M3 3h20" stroke="#666" strokeWidth="1.500" strokeDasharray="1.500 1" />
        <path d="M2.500 17h20l-1 10h-19z" fill="#b6ee3c" /><path d="M3 23l18-1-.5 5H3z" fill="#50b315" />
        <path d="M6 14.500c1-3 4-3 5-1 1-4 6-3 5.500 0-.5 2-2 2.500-4 2.500 2 1 4 .5 5 3-2-1-4-.5-5 .5-2 0-4 0-6 1 0-2-1.500-4-.5-6z" fill="#4aa51c" stroke="#173c0c" strokeWidth=".9" />
        <path d="M27.500 2.500L21 21l-1 4" stroke="#d99316" strokeWidth="2.200" fill="none" /><path d="M28.500 .5l-1.200 3" stroke="#8b2f4a" strokeWidth="2.500" />
      </svg>
    ),
  },
  {
    state: "active",
    icon: (
      <>
        <svg {...sz}>
          <circle cx="15" cy="15" r="15" fill="#fbc116" />
          <path d="M15 15L2 7.500A15 15 0 0 1 28 7.500H15z" fill="#e33b2e" />
          <path d="M15 15l6.500 3.750L15 30A15 15 0 0 1 2 7.500l6.500 11.250z" fill="#2ca24c" />
          <circle cx="15" cy="15" r="7.200" fill="#fff" /><circle cx="15" cy="15" r="5.700" fill="#2f7de9" />
        </svg>
        <Badge cls="-top-[6px] left-[16px] rounded-full bg-[#7e57c2] text-[12px]!">H</Badge>
      </>
    ),
  },
  {
    icon: (
      <svg {...sz}>
        <circle cx="15" cy="15" r="13.500" fill="#ff6c37" /><path d="M20 10l-8 8-4.500 5" stroke="#fff" strokeWidth="1.600" fill="none" /><path d="M18.500 9.500L11.500 17l1 2.500 7.500-6.500z" fill="#fff" /><circle cx="21" cy="8.300" r="2.500" fill="#fff" />
      </svg>
    ),
  },
  {
    icon: (
      <svg {...sz}>
        <defs>
          <linearGradient id="ph" x1="0" y1="0" x2="1" y2="1"><stop stopColor="#1590e2" /><stop offset="1" stopColor="#6a4fa8" /></linearGradient>
          <linearGradient id="mt" x1="0" y1="1" x2="1" y2="0"><stop stopColor="#39d0f7" /><stop offset="1" stopColor="#2fa9ee" /></linearGradient>
        </defs>
        <rect x="2" y="2" width="26" height="26" rx="3" fill="url(#ph)" /><path d="M2 22l11-10.500a3 3 0 0 1 4 0L28 22v3a3 3 0 0 1-3 3H5a3 3 0 0 1-3-3z" fill="url(#mt)" /><path d="M7 28l8-8.500a2 2 0 0 1 2.500 0L26 28z" fill="#0f62b4" /><circle cx="21.500" cy="6.500" r="2.400" fill="#fff" />
      </svg>
    ),
  },
];

function Taskbar() {
  return (
    <div className={`flex h-[60px] shrink-0 border-t border-[#c4c4c4] bg-[#f0f0f0] text-[#1b1b1b] ${SEGOE}`}>
      <div className="flex w-[372px] shrink-0 items-center pl-[25px]">
        <WeatherIcon />
        <div className="ml-[8px] flex flex-col pb-px text-[14.300px] leading-[20px] tracking-[-0.200px]">
          <span>79°F</span>
          <span className="tracking-[0.250px] text-[#5c5c5c]">Mostly cloudy</span>
        </div>
      </div>
      <div className="flex w-[55px] shrink-0 items-center justify-center">
        <div className="grid size-[29px] grid-cols-2 gap-px overflow-hidden rounded-[1px]">
          <i className="bg-linear-to-br from-[#4fd0fb] to-[#28aef0]" />
          <i className="bg-linear-to-br from-[#35b6f3] to-[#1b95e4]" />
          <i className="bg-linear-to-br from-[#22a5ea] to-[#0c7fd9]" />
          <i className="bg-linear-to-br from-[#1490e0] to-[#0173d3]" />
        </div>
      </div>
      <div className="flex w-[132px] shrink-0 items-center pl-[5px]">
        <div className="flex h-[38px] w-[123px] items-center rounded-full border border-[#e4e4e4] bg-[#fbfbfb] pl-[27px]">
          <Search size={18} strokeWidth={2.200} />
          <span className="ml-[7px] text-[14.300px] tracking-[-0.100px]">Search</span>
        </div>
      </div>
      <div className="flex shrink-0">
        {apps.map((a, i) => (
          <div key={i} className="flex w-[55px] justify-center pt-[5px]">
            <div className={a.state === "active" ? "flex h-[49px] w-[49px] flex-col items-center rounded-[5px] border border-[#e4e4e4] bg-[#f9f9f9] pt-[8px]" : "flex h-[49px] w-[49px] flex-col items-center pt-[9px]"}>
              <div className="relative flex size-[30px] items-center justify-center">{a.icon}</div>
              {a.state !== "none" && (
                <i className={a.state === "active" ? "mt-[5px] h-[4px] w-[20px] shrink-0 rounded-full bg-[#0078d4]" : "mt-[5px] h-[4px] w-[8px] shrink-0 rounded-full bg-[#868686]"} />
              )}
            </div>
          </div>
        ))}
      </div>
      <div className="ml-auto flex items-center">
        <Cell w="w-[36px]"><svg width="16" height="9" viewBox="0 0 16 9" fill="none" stroke="#1b1b1b" strokeWidth="1.400"><path d="M.7 8L8 1l7.300 7" /></svg></Cell>
        <Cell w="w-[33px]">
          <svg width="20" height="16" viewBox="0 0 20 16" fill="none" stroke="#1b1b1b" strokeWidth="1.400"><path d="M.7 5.500a13 13 0 0 1 18.600 0M3.300 8.300a9.300 9.300 0 0 1 13.400 0M5.900 11a5.600 5.600 0 0 1 8.200 0" /><circle cx="10" cy="13.800" r="1.500" fill="#1b1b1b" /></svg>
        </Cell>
        <Cell w="w-[28px]">
          <svg width="20" height="18" viewBox="0 0 20 18" fill="none" stroke="#1b1b1b" strokeWidth="1.300"><path d="M.8 6.500v5h3l4.700 4.200V2.300L3.800 6.500zM11.500 6c1.500 2 1.500 4 0 6M14 4c2.700 3 2.700 7 0 10M16.500 2c4 4.500 4 9.500 0 14" /></svg>
        </Cell>
        <Cell w="w-[32px]">
          <svg width="21" height="17" viewBox="0 0 21 17" fill="none" stroke="#1b1b1b" strokeWidth="1.400"><path d="M10 4.500h5.500a2 2 0 0 1 2 2v6.500a2 2 0 0 1-2 2H3" /><path d="M18 8h2.500v3.500H18z" fill="#1b1b1b" stroke="none" /><path d="M7.500 .5c2 4.500 1 10-3 12C-.500 12 .5 7 3 4.500L4 6z" fill="#1b1b1b" stroke="none" /><path d="M1 14.500L5.500 9" /></svg>
        </Cell>
        <div className="flex w-[76px] flex-col items-end pb-px text-[14.500px] leading-[20px]">
          <span>9:04 AM</span>
          <span>2/9/2023</span>
        </div>
        <div className="mr-[24px] ml-[10px] flex size-[20px] items-center justify-center rounded-full bg-[#0067c0] text-[12px] text-white">6</div>
      </div>
    </div>
  );
}

export default function App() {
  return (
    <div className="flex h-[1080px] w-[1920px] flex-col overflow-hidden bg-[#f0f0f0]">
      <div className="flex h-[1020px] shrink-0 border-b border-[#767676]">
        <PhotosWindow />
        <BrowserWindow />
      </div>
      <Taskbar />
    </div>
  );
}
